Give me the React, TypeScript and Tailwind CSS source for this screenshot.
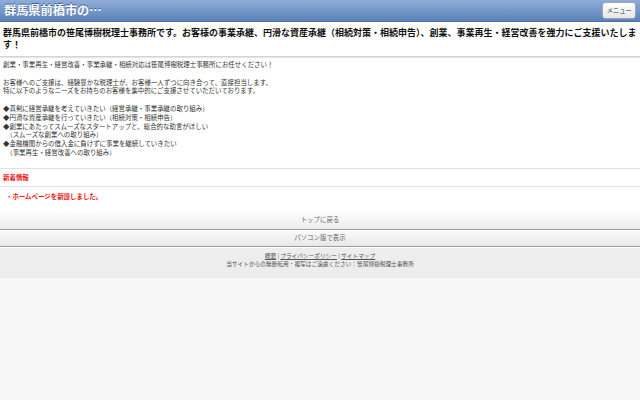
import React from 'react';

const font = { fontFamily: '"Noto Sans CJK JP", "Noto Sans", sans-serif' };

const needs = [
  '◆真剣に経営承継を考えていきたい（経営承継・事業承継の取り組み）',
  '◆円滑な資産承継を行っていきたい（相続対策・相続申告）',
  '◆創業にあたってスムーズなスタートアップと、総合的な助言がほしい',
  '　（スムーズな創業への取り組み）',
  '◆金融機関からの借入金に負けずに事業を継続していきたい',
  '　（事業再生・経営改善への取り組み）',
];

export default function App() {
  return (
    <div className="min-h-screen bg-[#f7f7f7] text-[#222]" style={font}>
      <header className="h-[22px] flex items-center justify-between pl-[4px] pr-[4px] bg-gradient-to-b from-[#8fadd8] to-[#5b82b9] border-b border-[#4d72a8]">
        <h1 className="text-[12.2px] font-bold text-white leading-none [text-shadow:0_-1px_0_#3d5f8f]">
          群馬県前橋市の…
        </h1>
        <button className="h-[17px] px-[3px] text-[6.4px] text-[#333] rounded-[3px] border border-[#9aa6b6] bg-gradient-to-b from-white to-[#e6e6e6]">
          メニュー
        </button>
      </header>

      <div className="bg-white">
        <p className="px-[3px] pt-[5px] pb-[5px] text-[9px] leading-[12px] font-bold text-[#111] border-b border-[#d4d4d4] shadow-[0_1px_1px_#e6e6e6]">
          群馬県前橋市の笹尾博樹税理士事務所です。お客様の事業承継、円滑な資産承継（相続対策・相続申告）、創業、事業再生・経営改善を強力にご支援いたします！
        </p>

        <div className="px-[3px] pt-[4px] pb-[10px] text-[6.45px] leading-[8.8px] text-[#333]">
          <p>創業・事業再生・経営改善・事業承継・相続対応は笹尾博樹税理士事務所にお任せください！</p>
          <p className="mt-[8.8px]">お客様へのご支援は、経験豊かな税理士が、お客様一人ずつに向き合って、直接担当します。</p>
          <p>特に以下のようなニーズをお持ちのお客様を集中的にご支援させていただいております。</p>
          <div className="mt-[8.8px]">
            {needs.map((n) => (
              <p key={n}>{n}</p>
            ))}
          </div>
        </div>

        <div className="border-t border-[#e2e2e2] px-[3px] py-[4px] text-[6.45px] leading-[9px] font-bold text-[#ee1111]">
          新着情報
        </div>
        <div className="border-t border-[#e2e2e2] pl-[6px] pt-[5px] pb-[9px] text-[6.45px] leading-[9px] font-bold text-[#ee1111]">
          ・ホームページを新設しました。
        </div>
      </div>

      <div className="h-[20px] flex items-center justify-center pt-[2px] text-[6.45px] text-[#666] bg-gradient-to-b from-white to-[#ececec] border-b border-[#9c9c9c]">
        トップに戻る
      </div>
      <div className="h-[17px] flex items-center justify-center text-[6.45px] text-[#666] bg-gradient-to-b from-[#fafafa] to-[#e8e8e8] border-t border-white border-b border-b-[#9c9c9c]">
        パソコン版で表示
      </div>

      <footer className="bg-[#ededed] border-t border-white pt-[4px] pb-[10px] text-center text-[5.7px] leading-[8px] text-[#555]">
        <p>
          <a className="underline">概要</a> | <a className="underline">プライバシーポリシー</a> |{' '}
          <a className="underline">サイトマップ</a>
        </p>
        <p>当サイトからの無断転用・複写はご遠慮ください：笹尾博樹税理士事務所</p>
      </footer>
    </div>
  );
}
